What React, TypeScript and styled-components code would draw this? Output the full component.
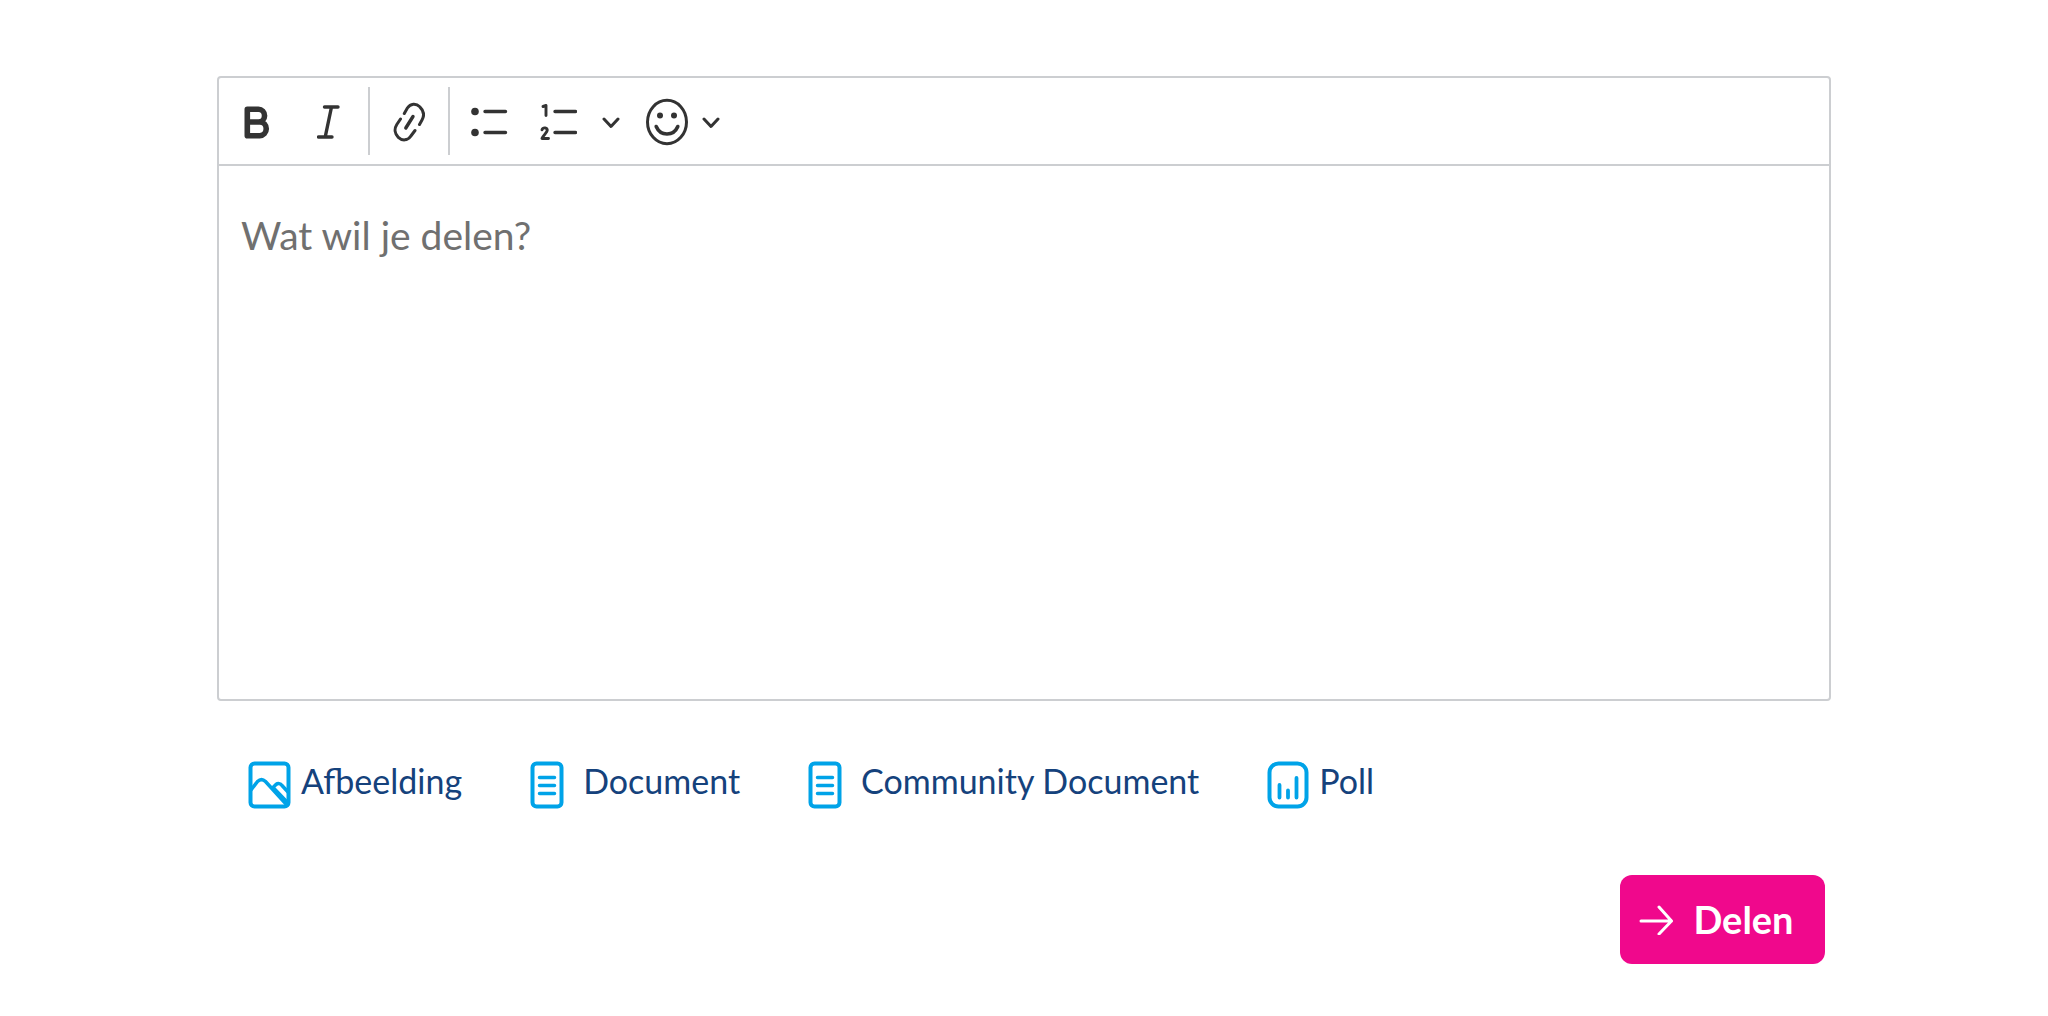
import React from 'react';
import styled, { createGlobalStyle } from 'styled-components';

const GlobalStyle = createGlobalStyle`
  *, *::before, *::after { box-sizing: border-box; }
  body {
    margin: 0;
    background: #fff;
    font-family: Lato, "Open Sans", sans-serif;
  }
  button, textarea { font-family: inherit; }
`;

const Page = styled.form`
  padding: 76px 217px 52px;
`;

const Editor = styled.div`
  display: flex;
  flex-direction: column;
  border: 2px solid #ccced1;
  border-radius: 4px;
`;

const Toolbar = styled.div`
  display: flex;
  align-items: center;
  gap: 2px;
  height: 88px;
  padding: 0 3px;
  border-bottom: 2px solid #ccced1;
`;

const ToolButton = styled.button<{ $width?: number }>`
  display: flex;
  align-items: center;
  justify-content: center;
  width: ${({ $width }) => $width ?? 70}px;
  height: 68px;
  padding: 2px 0 0;
  border: 0;
  border-radius: 4px;
  background: none;
  color: #333;
  cursor: pointer;
`;

const SplitButton = styled.div`
  display: flex;
`;

const DropdownButton = styled(ToolButton)`
  width: auto;
  padding: 2px 12px 0;
  gap: 14px;
`;

const Separator = styled.span`
  width: 2px;
  height: 68px;
  margin: 0 2px;
  background: #ccced1;
`;

const TextArea = styled.textarea`
  display: block;
  width: 100%;
  height: 533px;
  padding: 45px 22px;
  border: 0;
  outline: 0;
  resize: none;
  background: transparent;
  color: #333;
  font-size: 39px;
  line-height: 48px;
  &::placeholder { color: #707070; opacity: 1; }
`;

const Attachments = styled.div`
  display: flex;
  align-items: center;
  gap: 68px;
  padding: 56px 31px 0;
`;

const AttachButton = styled.button<{ $gap: number }>`
  display: flex;
  align-items: center;
  gap: ${({ $gap }) => $gap}px;
  height: 56px;
  padding: 0;
  border: 0;
  background: none;
  color: #15427c;
  font-size: 34px;
  line-height: 48px;
  white-space: nowrap;
  cursor: pointer;
`;

const AttachLabel = styled.span`
  padding-bottom: 8px;
`;

const Actions = styled.div`
  display: flex;
  justify-content: flex-end;
  padding: 62px 6px 0;
`;

const ShareButton = styled.button`
  display: flex;
  align-items: center;
  justify-content: center;
  gap: 20px;
  width: 205px;
  height: 89px;
  padding: 0 12px 2px 0;
  border: 0;
  border-radius: 12px;
  background: #f0088c;
  color: #fff;
  font-size: 38px;
  font-weight: 700;
  line-height: 48px;
  cursor: pointer;
`;

const Icon = styled.svg`
  display: block;
  flex: none;
  fill: none;
  stroke: currentColor;
  stroke-linecap: round;
  stroke-linejoin: round;
`;

const AttachIcon = styled(Icon)`
  stroke: #00a3e8;
  stroke-width: 4;
`;

const BoldIcon = () => (
  <Icon width="26" height="33" viewBox="0 0 26 33" strokeWidth="5.600">
    <path d="M3.300 3.300H14.500a6 6.300 0 0 1 0 12.700H3.300zM3.300 16H15.800a6.400 6.800 0 0 1 0 13.700H3.300z" />
  </Icon>
);

const ItalicIcon = () => (
  <Icon width="24" height="34" viewBox="0 0 24 34" strokeWidth="3.400">
    <path d="M7.500 2H21M1.500 32H15M14.500 2L8.200 32" />
  </Icon>
);

const LinkIcon = () => (
  <Icon width="32" height="40" viewBox="0 0 32 40" strokeWidth="3">
    <path d="M11.300 11.500L14.400 6C17.500 1.300 23 1 26.800 4.800C31 8.800 31.500 13.500 29 18L26.500 22.500M7.500 17L3.800 22.500C1 27 1.800 32 5.300 35.300C9.300 39 14.500 38.700 17.500 34.500L22 28.500" />
    <path d="M20 14.500L12.800 26" strokeWidth="3.400" />
  </Icon>
);

const BulletsIcon = () => (
  <Icon width="38" height="34" viewBox="0 0 38 34" strokeWidth="3.400">
    <path d="M15 6.500H35.500M15 27.500H35.500" />
    <circle cx="5" cy="6.500" r="3.800" fill="currentColor" stroke="none" />
    <circle cx="5" cy="27.500" r="3.800" fill="currentColor" stroke="none" />
  </Icon>
);

const NumbersIcon = () => (
  <Icon width="38" height="38" viewBox="0 0 38 38" strokeWidth="3.400">
    <path d="M16 8.500H36.500M16 29.500H36.500" />
    <path d="M4 3.500L7 2.500V12.500M3 26.800C4 24 8.900 24.400 8.200 27.600C7.800 29.800 5 31.500 3 35.500H9.500" strokeWidth="2.900" />
  </Icon>
);

const ChevronIcon = () => (
  <Icon width="18" height="14" viewBox="0 0 18 14" strokeWidth="3">
    <path d="M2 4L9 11.500L16 4" />
  </Icon>
);

const SmileIcon = () => (
  <Icon width="42" height="48" viewBox="0 0 42 48" strokeWidth="3">
    <ellipse cx="21" cy="24" rx="19.500" ry="21.700" />
    <path d="M10.200 28.500C14.500 38.500 27.500 38.500 31.800 28.500" strokeWidth="3.600" />
    <circle cx="14" cy="17.500" r="3" fill="currentColor" stroke="none" />
    <circle cx="28" cy="17.500" r="3" fill="currentColor" stroke="none" />
  </Icon>
);

const ImageIcon = () => (
  <AttachIcon width="43" height="48" viewBox="0 0 43 48">
    <rect x="2.500" y="2.500" width="38" height="43" rx="4" />
    <path d="M3 29L9.500 20.500C12 18 15 18 17.500 20.500L38 43M24 27.500L28 23.500C30 22 32.500 22.500 34 24.500L40 31M26.500 28L39 41" strokeWidth="3.500" />
  </AttachIcon>
);

const DocumentIcon = () => (
  <AttachIcon width="34" height="48" viewBox="0 0 34 48">
    <rect x="2.500" y="2.500" width="29" height="43" rx="4" />
    <path d="M9.500 16.500H24.500M9.500 24.500H24.500M9.500 32.500H24.500" strokeWidth="3.500" />
  </AttachIcon>
);

const PollIcon = () => (
  <AttachIcon width="42" height="48" viewBox="0 0 42 48">
    <rect x="2.500" y="2.500" width="37" height="43" rx="9" />
    <path d="M12.500 24V36.500M21 29.500V36.500M29.500 17V36.500" strokeWidth="3.800" />
  </AttachIcon>
);

const ArrowIcon = () => (
  <Icon width="34" height="32" viewBox="0 0 34 32" strokeWidth="3">
    <path d="M2 18H32.500M20 4L32.500 18L20 31" />
  </Icon>
);

const attachments = [
  { label: 'Afbeelding', icon: <ImageIcon />, gap: 10 },
  { label: 'Document', icon: <DocumentIcon />, gap: 19 },
  { label: 'Community Document', icon: <DocumentIcon />, gap: 19 },
  { label: 'Poll', icon: <PollIcon />, gap: 10 },
];

export default function App() {
  return (
    <>
      <GlobalStyle />
      <Page onSubmit={(event) => event.preventDefault()}>
        <Editor>
          <Toolbar role="toolbar">
            <ToolButton type="button" aria-label="Vet"><BoldIcon /></ToolButton>
            <ToolButton type="button" aria-label="Cursief"><ItalicIcon /></ToolButton>
            <Separator />
            <ToolButton type="button" aria-label="Link"><LinkIcon /></ToolButton>
            <Separator />
            <ToolButton type="button" aria-label="Opsomming"><BulletsIcon /></ToolButton>
            <SplitButton>
              <ToolButton type="button" $width={64} aria-label="Genummerde lijst"><NumbersIcon /></ToolButton>
              <ToolButton type="button" $width={42} aria-label="Lijstopties" aria-haspopup="menu"><ChevronIcon /></ToolButton>
            </SplitButton>
            <DropdownButton type="button" aria-label="Emoji" aria-haspopup="menu">
              <SmileIcon />
              <ChevronIcon />
            </DropdownButton>
          </Toolbar>
          <TextArea aria-label="Bericht" placeholder="Wat wil je delen?" />
        </Editor>
        <Attachments>
          {attachments.map(({ label, icon, gap }) => (
            <AttachButton key={label} type="button" $gap={gap}>
              {icon}
              <AttachLabel>{label}</AttachLabel>
            </AttachButton>
          ))}
        </Attachments>
        <Actions>
          <ShareButton type="submit">
            <ArrowIcon />
            <span>Delen</span>
          </ShareButton>
        </Actions>
      </Page>
    </>
  );
}
